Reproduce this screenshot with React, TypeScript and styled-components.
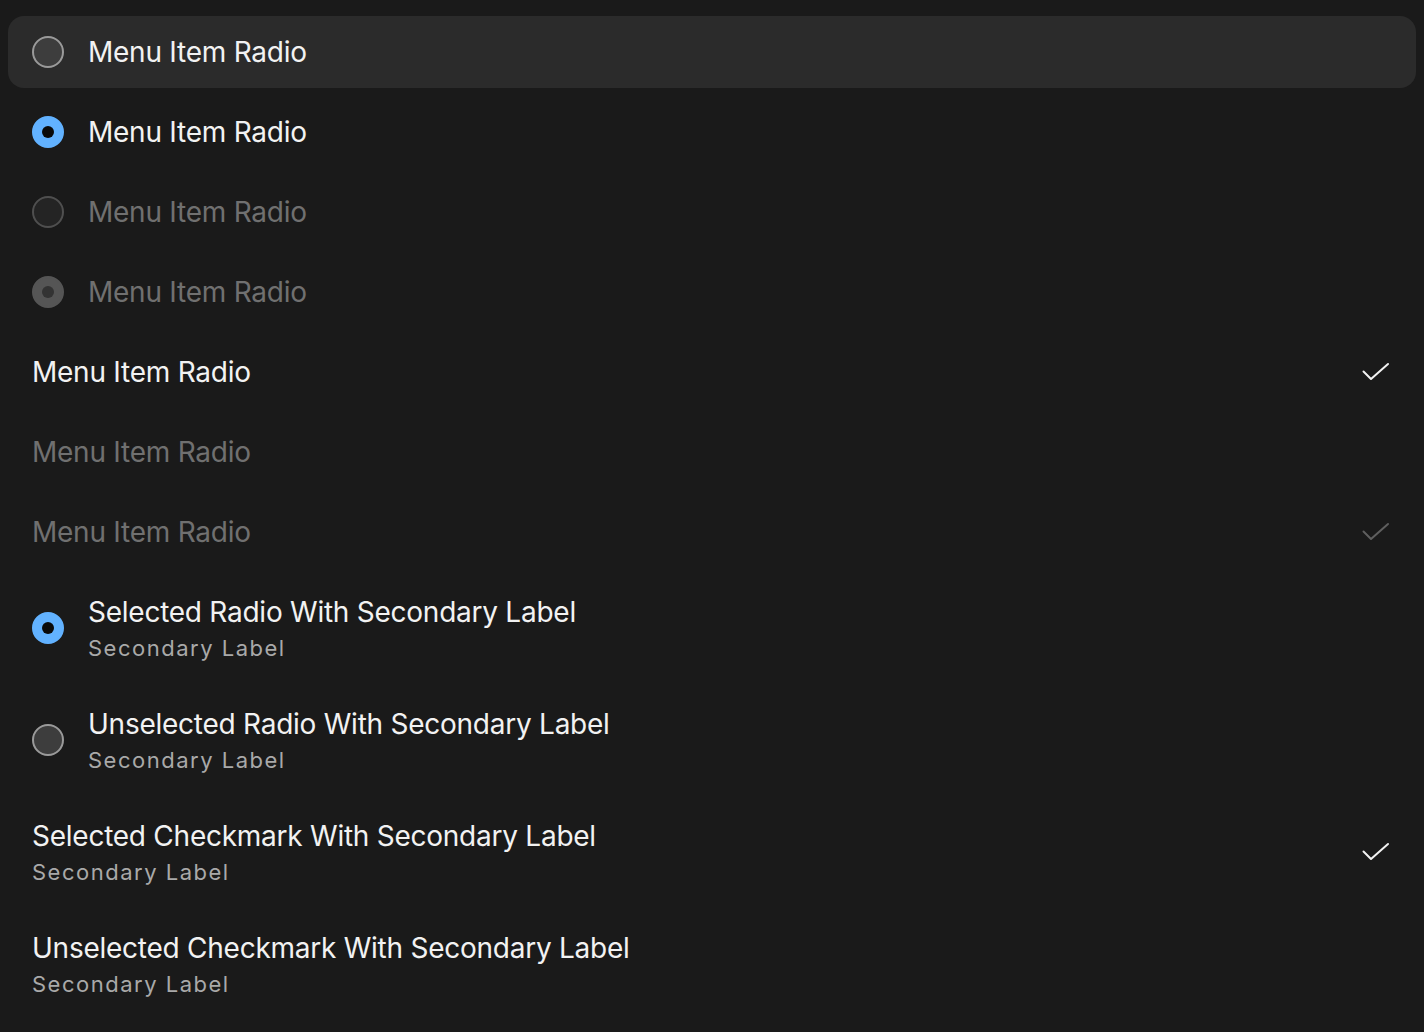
import React from "react";
import styled, { createGlobalStyle } from "styled-components";

const Global = createGlobalStyle`
  html, body { margin: 0; padding: 0; background: #1a1a1a; }
  body { font-family: Inter, "Noto Sans", sans-serif; -webkit-font-smoothing: antialiased; }
`;

const Menu = styled.div`
  display: flex;
  flex-direction: column;
  gap: 8px;
  padding: 16px 8px;
  background: #1a1a1a;
`;

const Item = styled.div<{ $highlighted?: boolean; $tall?: boolean }>`
  display: flex;
  align-items: center;
  gap: 24px;
  height: ${(p) => (p.$tall ? 104 : 72)}px;
  padding: 0 24px;
  border-radius: 16px;
  background: ${(p) => (p.$highlighted ? "#2b2b2b" : "transparent")};
  box-sizing: border-box;
`;

type RadioState = "off" | "on" | "disabled" | "disabledOn";

const Radio = styled.span<{ $state: RadioState }>`
  flex: none;
  width: 32px;
  height: 32px;
  border-radius: 50%;
  box-sizing: border-box;
  display: flex;
  align-items: center;
  justify-content: center;
  border: 2px solid
    ${(p) =>
      p.$state === "off"
        ? "#9a9a9a"
        : p.$state === "on"
        ? "#62b2ff"
        : p.$state === "disabled"
        ? "#4f4f4f"
        : "#555555"};
  background: ${(p) =>
    p.$state === "off"
      ? "#3d3d3d"
      : p.$state === "on"
      ? "#62b2ff"
      : p.$state === "disabled"
      ? "#242424"
      : "#555555"};

  &::after {
    content: "";
    display: ${(p) => (p.$state === "on" || p.$state === "disabledOn" ? "block" : "none")};
    width: 12px;
    height: 12px;
    border-radius: 50%;
    background: ${(p) => (p.$state === "on" ? "#0a0a0a" : "#333333")};
  }
`;

const Labels = styled.div`
  flex: 1;
  display: flex;
  flex-direction: column;
  min-width: 0;
`;

const Primary = styled.span<{ $disabled?: boolean }>`
  font-size: 28px;
  line-height: 36px;
  letter-spacing: -0.25px;
  color: ${(p) => (p.$disabled ? "#707070" : "#f2f2f2")};
  white-space: nowrap;
`;

const Secondary = styled.span`
  margin-top: 4px;
  font-size: 22px;
  line-height: 28px;
  letter-spacing: 1.5px;
  color: #a9a9a9;
  white-space: nowrap;
`;

const CheckSlot = styled.span`
  flex: none;
  width: 32px;
  height: 32px;
  display: flex;
  align-items: center;
  justify-content: center;
`;

const Check = ({ color }: { color: string }) => (
  <svg width="32" height="32" viewBox="0 0 32 32" fill="none">
    <path d="M3.5 15.5 L11 23 L28 8" stroke={color} strokeWidth="2" strokeLinecap="round" strokeLinejoin="round" />
  </svg>
);

export default function App() {
  return (
    <>
      <Global />
      <Menu>
        <Item $highlighted>
          <Radio $state="off" />
          <Labels><Primary>Menu Item Radio</Primary></Labels>
        </Item>
        <Item>
          <Radio $state="on" />
          <Labels><Primary>Menu Item Radio</Primary></Labels>
        </Item>
        <Item>
          <Radio $state="disabled" />
          <Labels><Primary $disabled>Menu Item Radio</Primary></Labels>
        </Item>
        <Item>
          <Radio $state="disabledOn" />
          <Labels><Primary $disabled>Menu Item Radio</Primary></Labels>
        </Item>
        <Item>
          <Labels><Primary>Menu Item Radio</Primary></Labels>
          <CheckSlot><Check color="#f2f2f2" /></CheckSlot>
        </Item>
        <Item>
          <Labels><Primary $disabled>Menu Item Radio</Primary></Labels>
        </Item>
        <Item>
          <Labels><Primary $disabled>Menu Item Radio</Primary></Labels>
          <CheckSlot><Check color="#5f5f5f" /></CheckSlot>
        </Item>
        <Item $tall>
          <Radio $state="on" />
          <Labels>
            <Primary>Selected Radio With Secondary Label</Primary>
            <Secondary>Secondary Label</Secondary>
          </Labels>
        </Item>
        <Item $tall>
          <Radio $state="off" />
          <Labels>
            <Primary>Unselected Radio With Secondary Label</Primary>
            <Secondary>Secondary Label</Secondary>
          </Labels>
        </Item>
        <Item $tall>
          <Labels>
            <Primary>Selected Checkmark With Secondary Label</Primary>
            <Secondary>Secondary Label</Secondary>
          </Labels>
          <CheckSlot><Check color="#f2f2f2" /></CheckSlot>
        </Item>
        <Item $tall>
          <Labels>
            <Primary>Unselected Checkmark With Secondary Label</Primary>
            <Secondary>Secondary Label</Secondary>
          </Labels>
        </Item>
      </Menu>
    </>
  );
}
